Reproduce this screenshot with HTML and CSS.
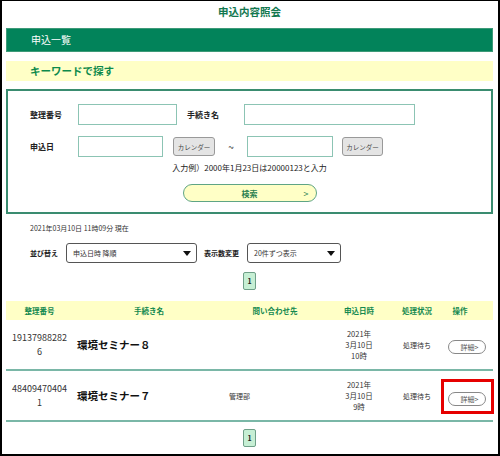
FILE: index.html
```html
<!DOCTYPE html>
<html lang="ja">
<head>
    <meta charset="UTF-8">
    <meta name="viewport" content="width=device-width, initial-scale=1.0">
    <title>申込内容照会</title>
    <link rel="stylesheet" href="styles.css">
</head>
<body>
    <div class="frame">
        <h1 class="page-title">申込内容照会</h1>

        <div class="list-bar">申込一覧</div>
        <h2 class="keyword-bar">キーワードで探す</h2>

        <div class="search-box">
            <div class="form-row">
                <label class="form-label">整理番号</label>
                <input type="text" class="text-input w-num">
                <label class="form-label label-mid">手続き名</label>
                <input type="text" class="text-input w-name">
            </div>
            <div class="form-row row-date">
                <label class="form-label">申込日</label>
                <input type="text" class="text-input w-date">
                <button class="cal-btn">カレンダー</button>
                <span class="tilde">~</span>
                <input type="text" class="text-input w-date2">
                <button class="cal-btn cal-btn-2">カレンダー</button>
            </div>
            <p class="hint">入力例）2000年1月23日は20000123と入力</p>
            <button class="search-btn"><span></span><span class="search-text">検索</span><span class="chevron">&gt;</span></button>
        </div>

        <p class="timestamp">2021年03月10日 11時09分 現在</p>

        <div class="sort-row">
            <span class="sort-label">並び替え</span>
            <div class="select select-sort">
                <span>申込日時 降順</span>
                <span class="arrow"></span>
            </div>
            <span class="sort-label sort-label-2">表示数変更</span>
            <div class="select select-count">
                <span>20件ずつ表示</span>
                <span class="arrow"></span>
            </div>
        </div>

        <div class="pager"><button class="pager-btn">1</button></div>

        <table class="result-table">
            <colgroup>
                <col style="width: 67px">
                <col style="width: 152px">
                <col style="width: 100px">
                <col style="width: 68px">
                <col style="width: 48px">
                <col style="width: 52px">
            </colgroup>
            <thead>
                <tr>
                    <th>整理番号</th>
                    <th>手続き名</th>
                    <th>問い合わせ先</th>
                    <th>申込日時</th>
                    <th>処理状況</th>
                    <th class="th-op">操作</th>
                </tr>
            </thead>
            <tbody>
                <tr>
                    <td class="num">191379882826</td>
                    <td class="name">環境セミナー８</td>
                    <td class="contact"></td>
                    <td class="date">2021年<br>3月10日<br>10時</td>
                    <td class="status">処理待ち</td>
                    <td class="op"><button class="detail-btn">詳細&gt;</button></td>
                </tr>
                <tr>
                    <td class="num">484094704041</td>
                    <td class="name">環境セミナー７</td>
                    <td class="contact">管理部</td>
                    <td class="date">2021年<br>3月10日<br>9時</td>
                    <td class="status">処理待ち</td>
                    <td class="op"><span class="highlight"><button class="detail-btn">詳細&gt;</button></span></td>
                </tr>
            </tbody>
        </table>

        <div class="pager pager-bottom"><button class="pager-btn">1</button></div>
    </div>
</body>
</html>
```

FILE: styles.css
```css
* {
    margin: 0;
    padding: 0;
    box-sizing: border-box;
}

body {
    font-family: "Noto Sans CJK JP", "Noto Sans", sans-serif;
    color: #222;
    background: #fff;
}

.frame {
    width: 500px;
    height: 456px;
    border: 2px solid #000;
    border-top-width: 1px;
    padding: 0 5px 0 4px;
    overflow: hidden;
}

.page-title {
    height: 27px;
    padding-top: 4px;
    text-align: center;
    font-size: 10.5px;
    line-height: 14px;
    font-weight: bold;
    color: #12784f;
}

.list-bar {
    height: 24px;
    background: #02835a;
    border: 1px solid #3d9a78;
    color: #fff;
    font-size: 10px;
    line-height: 22px;
    padding-left: 24px;
}

.keyword-bar {
    margin-top: 9px;
    height: 20px;
    background: #ffffc6;
    color: #0d8a4c;
    font-size: 10.5px;
    line-height: 20px;
    font-weight: bold;
    padding-left: 24px;
}

/* search box */
.search-box {
    margin-top: 8px;
    height: 125px;
    border: 2px solid #3a8c70;
    padding-top: 13px;
}

.form-row {
    display: flex;
    align-items: center;
    height: 21px;
    padding-left: 22px;
}

.row-date {
    margin-top: 11px;
}

.form-label {
    width: 48px;
    font-size: 8px;
    font-weight: bold;
    color: #222;
}

.label-mid {
    width: 57px;
    margin-left: 10px;
}

.text-input {
    height: 21px;
    border: 1px solid #8cc4b4;
    background: #fff;
}

.w-num { width: 99px; }
.w-name { width: 171px; }
.w-date { width: 85px; }
.w-date2 { width: 86px; }

.cal-btn {
    width: 42px;
    height: 19px;
    margin-left: 10px;
    background: #e4e4e4;
    border: 1px solid #999;
    border-radius: 3px;
    font-family: inherit;
    font-size: 6.5px;
    color: #444;
}

.cal-btn-2 {
    width: 41px;
    margin-left: 9px;
}

.tilde {
    width: 32px;
    text-align: center;
    font-size: 10px;
    color: #333;
}

.hint {
    margin-top: 6px;
    text-align: center;
    font-size: 8px;
    line-height: 10px;
    color: #222;
}

.search-btn {
    display: grid;
    grid-template-columns: 1fr auto 1fr;
    align-items: center;
    width: 134px;
    height: 18px;
    margin: 11px auto 0;
    padding: 0 7px;
    background: #ffffc6;
    border: 1px solid #5fa585;
    border-radius: 9px;
    font-family: inherit;
    color: #2a7f50;
}

.search-text {
    font-size: 8px;
    font-weight: bold;
}

.chevron {
    justify-self: end;
    font-size: 9px;
}

.timestamp {
    margin-top: 9px;
    padding-left: 24px;
    font-size: 7px;
    line-height: 10px;
    color: #333;
}

/* sort controls */
.sort-row {
    display: flex;
    align-items: center;
    height: 20px;
    margin-top: 10px;
    padding-left: 24px;
}

.sort-label {
    width: 36px;
    font-size: 7px;
    font-weight: bold;
}

.sort-label-2 {
    width: 43px;
    margin-left: 7px;
}

.select {
    display: flex;
    align-items: center;
    justify-content: space-between;
    height: 20px;
    border: 1px solid #555;
    border-radius: 3px;
    padding: 0 5px 0 6px;
    font-size: 7px;
    color: #333;
}

.select-sort { width: 131px; }
.select-count { width: 94px; }

.arrow {
    width: 0;
    height: 0;
    border-left: 4px solid transparent;
    border-right: 4px solid transparent;
    border-top: 5px solid #111;
}

.pager {
    display: flex;
    justify-content: center;
    margin-top: 9px;
}

.pager-bottom {
    margin-top: 7px;
}

.pager-btn {
    width: 13px;
    height: 18px;
    background: #c6efd4;
    border: 1px solid #6f9f88;
    border-radius: 2px;
    font-family: inherit;
    font-size: 7px;
    font-weight: bold;
    color: #222;
}

/* result table */
.result-table {
    width: 100%;
    margin-top: 11px;
    table-layout: fixed;
    border-collapse: separate;
    border-spacing: 0;
}

.result-table th {
    height: 19px;
    background: #ffffc6;
    color: #13894f;
    font-size: 7.5px;
    font-weight: bold;
    text-align: center;
}

.result-table th.th-op {
    padding-right: 14px;
}

.result-table td {
    height: 51px;
    border-bottom: 2px solid #7ab7a7;
    vertical-align: middle;
}

.num {
    text-align: center;
    padding: 0 5px;
    font-size: 9px;
    line-height: 14px;
    color: #333;
    word-break: break-all;
}

.name {
    padding-left: 4px;
    font-size: 10.5px;
    font-weight: bold;
    color: #111;
}

.contact {
    padding-left: 4px;
    font-size: 7px;
    color: #333;
}

.date {
    text-align: center;
    font-size: 7.5px;
    line-height: 11px;
    color: #333;
}

.status {
    text-align: center;
    font-size: 7px;
    color: #333;
}

.op {
    text-align: center;
}

.detail-btn {
    width: 38px;
    height: 14px;
    padding-left: 5px;
    background: #fff;
    border: 1px solid #888;
    border-radius: 7px;
    font-family: inherit;
    font-size: 7px;
    color: #555;
    vertical-align: middle;
}

.highlight {
    position: relative;
    display: inline-block;
    vertical-align: middle;
}

.highlight::after {
    content: "";
    position: absolute;
    top: -6px;
    right: -8px;
    bottom: -5px;
    left: -7px;
    border: 3px solid #e60000;
}
```
